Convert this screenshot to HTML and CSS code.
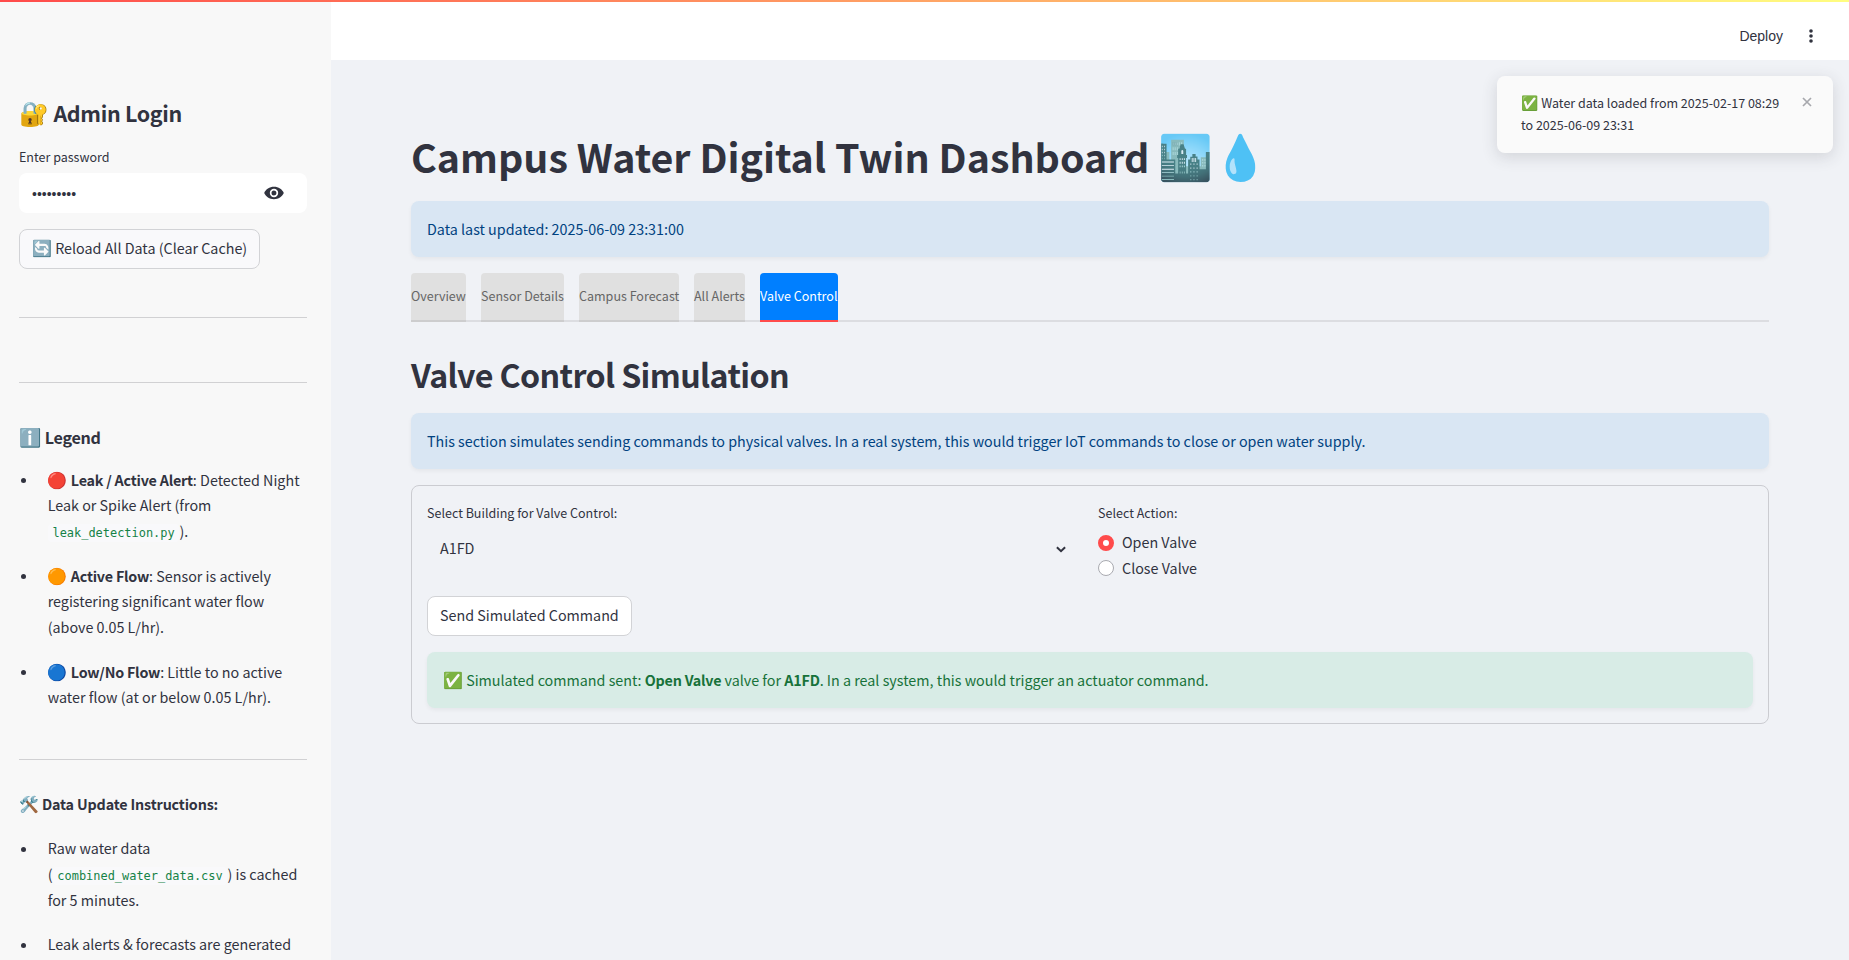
FILE: index.html
```html
<!DOCTYPE html>
<html lang="en">
<head>
<meta charset="utf-8">
<title>Campus Water Digital Twin Dashboard</title>
<link rel="stylesheet" href="styles.css">
</head>
<body>
<div class="decoration"></div>
<div class="app">
  <aside class="sidebar">
    <h2 class="side-title"><span class="emoji">🔐</span> Admin Login</h2>
    <label class="label">Enter password</label>
    <div class="password">
      <span class="dots">•••••••••</span>
      <svg class="eye" viewBox="0 0 20 14" width="20" height="14"><path fill-rule="evenodd" d="M10 .8C5.500.8 1.800 3.300.2 7c1.600 3.700 5.300 6.200 9.800 6.200s8.200-2.500 9.800-6.200C18.200 3.300 14.500.8 10 .8zm0 10.400a4.200 4.200 0 1 1 0-8.400 4.200 4.200 0 0 1 0 8.400zm0-6.700a2.500 2.500 0 1 0 0 5 2.500 2.500 0 0 0 0-5z"/></svg>
    </div>
    <button class="btn btn-side"><span class="emoji">🔄</span> Reload All Data (Clear Cache)</button>
    <hr class="rule rule-a">
    <hr class="rule rule-b">
    <h3 class="legend-title"><span class="emoji">ℹ️</span> Legend</h3>
    <ul class="list">
      <li><span class="emoji">🔴</span> <b>Leak / Active Alert</b>: Detected Night<br>Leak or Spike Alert (from<br><code>leak_detection.py</code>).</li>
      <li><span class="emoji">🟠</span> <b>Active Flow</b>: Sensor is actively<br>registering significant water flow<br>(above 0.05 L/hr).</li>
      <li><span class="emoji">🔵</span> <b>Low/No Flow</b>: Little to no active<br>water flow (at or below 0.05 L/hr).</li>
    </ul>
    <hr class="rule rule-c">
    <h4 class="update-title"><span class="emoji">🛠️</span> Data Update Instructions:</h4>
    <ul class="list">
      <li>Raw water data<br>(<code>combined_water_data.csv</code>) is cached<br>for 5 minutes.</li>
      <li>Leak alerts &amp; forecasts are generated</li>
    </ul>
  </aside>
  <div class="page">
    <header class="header">
      <span class="deploy">Deploy</span>
      <svg class="menu" viewBox="0 0 4 14" width="4" height="14"><circle cx="2" cy="2" r="1.800"/><circle cx="2" cy="7" r="1.800"/><circle cx="2" cy="12" r="1.800"/></svg>
    </header>
    <main class="main">
      <h1 class="title">Campus Water Digital Twin Dashboard <span class="emoji">🏙️</span><span class="emoji drop">💧</span></h1>
      <div class="alert info">Data last updated: 2025-06-09 23:31:00</div>
      <nav class="tabs">
        <span class="tab t1">Overview</span><span class="tab t2">Sensor Details</span><span class="tab t3">Campus Forecast</span><span class="tab t4">All Alerts</span><span class="tab t5 active">Valve Control</span>
      </nav>
      <h2 class="section">Valve Control Simulation</h2>
      <div class="alert info">This section simulates sending commands to physical valves. In a real system, this would trigger IoT commands to close or open water supply.</div>
      <section class="form">
        <div class="columns">
          <div class="column">
            <div class="label">Select Building for Valve Control:</div>
            <div class="select"><span class="value">A1FD</span><svg viewBox="0 0 10 7" width="10" height="7"><path d="M.9 1.200L5 5.200l4.100-4" fill="none" stroke="#31333f" stroke-width="2"/></svg></div>
          </div>
          <div class="column">
            <div class="label">Select Action:</div>
            <div class="radio"><i class="dot on"></i><span class="option">Open Valve</span></div>
            <div class="radio"><i class="dot"></i><span class="option">Close Valve</span></div>
          </div>
        </div>
        <button class="btn btn-send">Send Simulated Command</button>
        <div class="alert success"><span class="emoji">✅</span> Simulated command sent: <b>Open Valve</b> valve for <b>A1FD</b>. In a real system, this would trigger an actuator command.</div>
      </section>
    </main>
  </div>
</div>
<div class="toast">
  <div class="toast-text"><span class="emoji">✅</span> Water data loaded from 2025-02-17 08:29<br>to 2025-06-09 23:31</div>
  <svg class="close" viewBox="0 0 10 10" width="10" height="10"><path d="M1 1l8 8M9 1l-8 8" stroke="#a7a8ad" stroke-width="1.700"/></svg>
</div>
</body>
</html>
```
FILE: styles.css
```css
* { box-sizing: border-box; }
body {
  margin: 0;
  height: 960px;
  overflow: hidden;
  background: #f0f2f6;
  color: #31333f;
  font-family: "Noto Sans CJK SC", "Noto Color Emoji", sans-serif;
  font-size: 14.325px;
}
h1, h2, h3, h4 { margin: 0; font-weight: 600; white-space: nowrap; }
b { font-weight: 600; letter-spacing: -.22px; }
.emoji { font-family: "Noto Color Emoji"; font-size: 1.117em; line-height: 0; font-weight: 400; letter-spacing: 0; }
.decoration {
  position: absolute;
  z-index: 3;
  top: 0;
  left: 0;
  width: 100%;
  height: 2px;
  background: linear-gradient(90deg, #ff4b4b, #fffd80);
}
.app { display: flex; height: 960px; }

/* Sidebar */
.sidebar { width: 331px; height: 960px; overflow: hidden; flex: none; background: #f8f8f8; padding: 94.600px 24px 0 19px; }
.side-title { font-size: 21.48px; line-height: 36px; height: 52.400px; letter-spacing: -.33px; }
.label { display: block; font-size: 12.53px; line-height: 20px; height: 27px; white-space: nowrap; }
.sidebar .label { height: 26px; }
.password {
  display: flex;
  align-items: center;
  justify-content: space-between;
  height: 40px;
  padding: 0 23px 0 13px;
  background: #fff;
  border-radius: 8px;
}
.dots { font: 14px "Liberation Sans", Arial, sans-serif; padding-top: 3px; }
.eye { fill: #31333f; }
.btn {
  display: block;
  height: 40px;
  padding: 0 12px 2px;
  border: 1px solid #d2d3d6;
  border-radius: 8px;
  background: #fff;
  color: #31333f;
  font: inherit;
  line-height: 34px;
  white-space: nowrap;
  text-align: left;
}
.btn-side { margin-top: 16px; width: 241px; background: #f9f9fb; }
.rule { margin: 0; border: 0; height: 1px; background: #d1d1d3; }
.rule-a { margin-top: 48px; }
.rule-b { margin-top: 64px; }
.rule-c { margin-top: 49.100px; }
.legend-title { font-size: 16.11px; line-height: 24px; margin-top: 42px; height: 41.800px; letter-spacing: -.28px; }
.update-title { font-size: 14.32px; line-height: 24px; margin-top: 31.800px; height: 43.600px; letter-spacing: -.16px; }
.list { margin: 0; padding: 0; list-style: none; }
.list li { position: relative; padding-left: 28.700px; margin-bottom: 19.2px; line-height: 25.6px; white-space: nowrap; }
.list li::before {
  content: "";
  position: absolute;
  left: 2px;
  top: 11.400px;
  width: 5px;
  height: 5px;
  border-radius: 50%;
  background: #31333f;
}
code {
  font-family: "DejaVu Sans Mono", monospace;
  font-size: 11.95px;
  line-height: 0;
  padding: 2px 4.800px;
  border-radius: 4px;
  background: #f9f9fb;
  color: #158247;
}

/* Header */
.page { flex: 1; min-width: 0; }
.header { display: flex; align-items: center; justify-content: flex-end; height: 60px; padding: 12px 36px 0 0; background: #fff; }
.deploy { font: 14px "Liberation Sans", Arial, sans-serif; margin-right: 26px; }
.menu { fill: #31333f; }

/* Main column */
.main { padding: 70px 80px 0; }
.title { font-size: 39.38px; font-weight: 700; line-height: 52px; height: 71px; letter-spacing: -.02px; }
.alert { height: 56px; padding: 16px; border-radius: 8px; line-height: 24px; white-space: nowrap; box-shadow: 0 2px 4px rgba(0, 0, 0, .05); }
.info { background: #d9e6f3; color: #004280; }
.success { background: #d8ece6; color: #17723a; margin-top: 16px; }
.tabs { display: flex; gap: 15px; height: 49px; margin-top: 16px; box-shadow: inset 0 -2px #dcdde1; }
.tab { height: 49px; background: #e0e0e0; color: #666; border-radius: 4px 4px 0 0; border-bottom: 2px solid #cdcdce; font-size: 12.53px; line-height: 46px; white-space: nowrap; }
.t1 { width: 55px; }
.t2 { width: 83px; }
.t3 { width: 100px; }
.t4 { width: 51px; }
.t5 { width: 78px; }
.tab.active { background: #007fff; color: #fff; border-bottom-color: #ff4b4b; }
.section { font-size: 32.22px; line-height: 44px; height: 61px; margin-top: 30px; letter-spacing: -.64px; }
.form { margin-top: 16px; height: 239px; border: 1px solid #cbccd1; border-radius: 8px; padding: 15px 15px 0; }
.columns { display: grid; grid-template-columns: 1fr 1fr; gap: 16px; height: 95px; }
.column { padding-top: 2px; }
.select { display: flex; align-items: center; justify-content: space-between; height: 40px; padding: 0 16px 2px 13px; }
.value { line-height: 24px; padding-bottom: 2px; }
.radio { display: flex; align-items: center; gap: 8px; height: 25.6px; }
.option { line-height: 23px; padding-bottom: 2px; }
.dot { width: 16px; height: 16px; border-radius: 50%; border: 1px solid #a9aab0; background: #fff; }
.dot.on { border: 5px solid #ff4b4b; }

/* Toast */
.toast {
  position: absolute;
  z-index: 2;
  top: 76px;
  left: 1497px;
  display: flex;
  justify-content: space-between;
  width: 336px;
  height: 77px;
  padding: 16px 21px 0 24px;
  background: #fafafa;
  border-radius: 8px;
  box-shadow: 0 4px 16px rgba(49, 51, 63, .16);
}
.toast-text { font-size: 12.53px; line-height: 22.4px; white-space: nowrap; }
.close { margin-top: 5px; }
```
